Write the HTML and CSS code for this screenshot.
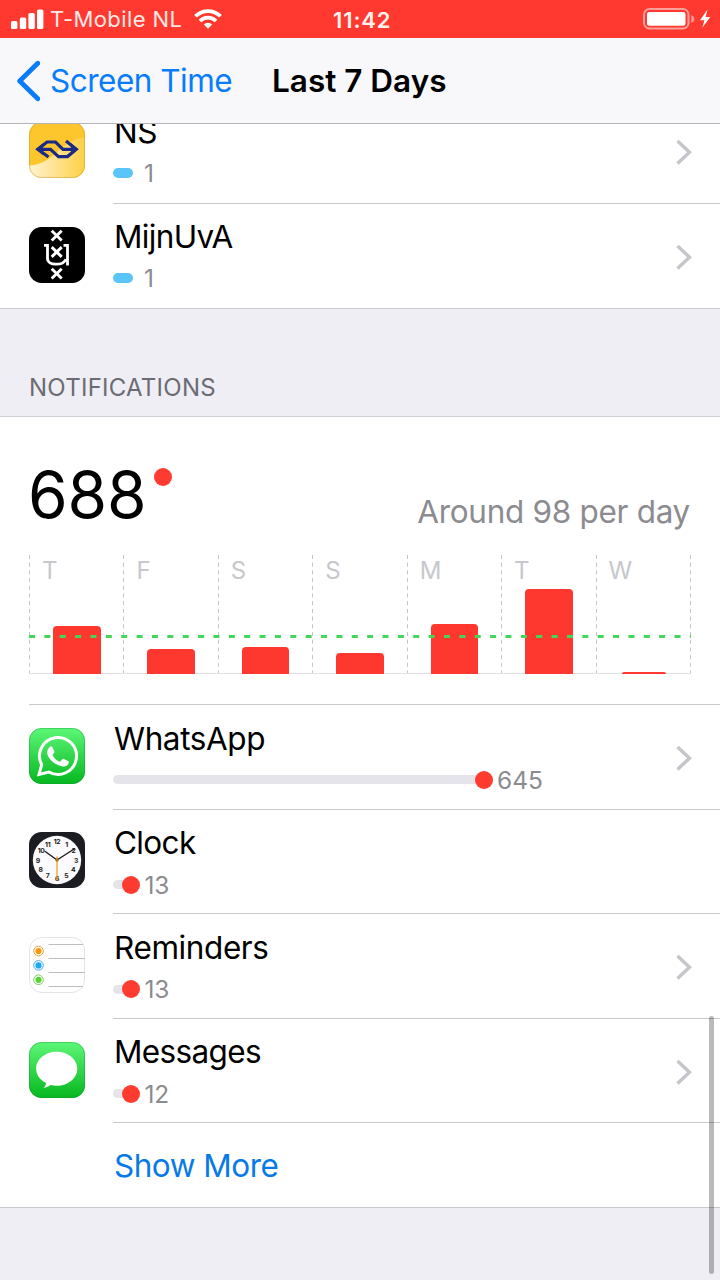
FILE: index.html
```
<!DOCTYPE html>
<html lang="en">
<head>
<meta charset="utf-8">
<title>Screen Time</title>
<link rel="stylesheet" href="styles.css">
</head>
<body>
<div class="screen">
  <header class="status">
    <div class="status-left">
      <svg class="signal" width="33" height="20" viewBox="0 0 33 20" fill="#fff"><rect x="0" y="12" width="6.4" height="8" rx="1.6"/><rect x="8.8" y="8.500" width="6.400" height="11.500" rx="1.600"/><rect x="17.400" y="4" width="6.400" height="16" rx="1.600"/><rect x="26" y="0.500" width="6.400" height="19.500" rx="1.600"/></svg>
      <span class="carrier">T-Mobile NL</span>
      <svg class="wifi" width="28" height="20" viewBox="0 0 28 20" fill="none" stroke="#fff" stroke-width="3.700"><path d="M1.500 7.300a17.500 17.500 0 0 1 25 0"/><path d="M6 12a11.300 11.300 0 0 1 16 0"/><path d="M9.800 15.500a6 6 0 0 1 8.400 0L14 19.700z" fill="#fff" stroke="none"/></svg>
    </div>
    <span class="time">11:42</span>
    <svg class="battery" width="68" height="24" viewBox="0 0 68 24"><rect x="1" y="2" width="44.500" height="19.500" rx="5.500" fill="none" stroke="#ff9f99" stroke-width="2"/><rect x="4" y="5" width="38.500" height="13.700" rx="2.200" fill="#fff"/><path d="M48.300 8.200c4 1.500 4 6.200 0 7.700z" fill="#ff9f99"/><path d="M64.500 2.500L57 13.200h4.500L59.300 20.800 67.300 10h-4.700z" fill="#fff"/></svg>
  </header>
  <nav class="nav">
    <svg class="back" width="24" height="42" viewBox="0 0 24 42" fill="none" stroke="#087cfb" stroke-width="4.800" stroke-linecap="round" stroke-linejoin="round"><path d="M21.800 3.300L3.700 21l18.100 17.700"/></svg>
    <span class="back-label">Screen Time</span>
    <h1 class="title">Last 7 Days</h1>
  </nav>
  <main class="content">
    <ul class="list pickups">
      <li class="row">
        <svg class="icon" width="56" height="56" viewBox="0 0 56 56">
          <defs><linearGradient id="ns" x1="0" y1="0" x2="1" y2="0"><stop offset="0" stop-color="#fff3d2"/><stop offset="1" stop-color="#fed045"/></linearGradient><clipPath id="tile"><rect width="56" height="56" rx="12.500"/></clipPath></defs>
          <g clip-path="url(#tile)"><rect width="56" height="56" fill="#fcc62c"/><path d="M0 43.500C10 43 18 39 26 32S41 18 56 15v41H0z" fill="url(#ns)"/></g>
          <rect x=".5" y=".5" width="55" height="55" rx="12" fill="none" stroke="#c8942b" stroke-opacity=".45"/>
          <g fill="none" stroke="#1b2a83" stroke-width="3.200"><path d="M19.500 35L9 27.300 18 20H26.500L34 27.300H43"/><path d="M13 27.300H21.500L29.500 34.600H38.500L47.200 27.300 37 19"/></g>
          <path d="M6.500 27.300l7.500-6v12zM49.500 27.300l-7.500-6v12z" fill="#1b2a83"/>
        </svg>
        <div class="body"><span class="name">NS</span><div class="metric"><i class="pill"></i><span class="num first">1</span></div></div>
        <svg class="chev" width="18" height="28" viewBox="0 0 18 28"><path d="M2.500 3L14.500 14.200 2.500 25.400"/></svg>
      </li>
      <li class="row last">
        <svg class="icon" width="56" height="56" viewBox="0 0 56 56"><rect width="56" height="56" rx="12.500"/>
          <g fill="none" stroke="#fff" stroke-width="2.900"><path d="M22.700 3.700l10 9.800M32.700 3.700l-10 9.800M22.700 20.100l10 9.800M32.700 20.100l-10 9.800M22.700 41.700l10 9.800M32.700 41.700l-10 9.800"/><path d="M15 18.300h3.500v13.200c0 7.500 15.500 7.500 18.500.7" stroke-width="2.800"/><path d="M34.500 18.300h4V38.500" stroke-width="2.800"/></g></svg>
        <div class="body"><span class="name tight">MijnUvA</span><div class="metric"><i class="pill"></i><span class="num first">1</span></div></div>
        <svg class="chev" width="18" height="28" viewBox="0 0 18 28"><path d="M2.500 3L14.500 14.200 2.500 25.400"/></svg>
      </li>
    </ul>
    <h2 class="section">NOTIFICATIONS</h2>
    <section class="panel">
      <div class="summary">
        <div class="total"><span class="total-num">688</span><i class="dot"></i></div>
        <span class="average">Around 98 per day</span>
      </div>
      <div class="chart">
        <div class="day"><span>T</span><i class="bar" style="height:48.500px"></i></div>
        <div class="day"><span>F</span><i class="bar" style="height:25.500px"></i></div>
        <div class="day"><span>S</span><i class="bar" style="height:27px"></i></div>
        <div class="day"><span>S</span><i class="bar" style="height:21px"></i></div>
        <div class="day"><span>M</span><i class="bar" style="height:50.500px"></i></div>
        <div class="day"><span>T</span><i class="bar" style="height:85.500px"></i></div>
        <div class="day"><span>W</span><i class="bar sliver" style="height:2px"></i></div>
        <svg class="lines" width="662" height="120" viewBox="0 0 662 120" fill="none"><path d="M.5 1v118M94.500 1v118M189.500 1v118M283.500 1v118M378.500 1v118M472.500 1v118M567.500 1v118M661.500 1v118" stroke="#c4c4cb" stroke-dasharray="4 3.700"/><path d="M0 82.500h662" stroke="#43d65b" stroke-width="3" stroke-dasharray="6 9.370"/></svg>
      </div>
      <ul class="list apps">
        <li class="row">
          <svg class="icon" width="56" height="56" viewBox="0 0 56 56"><defs><linearGradient id="wa" x2="0" y2="1"><stop stop-color="#5df777"/><stop offset="1" stop-color="#06b71f"/></linearGradient></defs><rect width="56" height="56" rx="12.500" fill="url(#wa)"/><rect x=".5" y=".5" width="55" height="55" rx="12" fill="none" stroke="#15903d" stroke-opacity=".35"/>
            <path d="M10 46.400l2.700-9.700A18.500 18.500 0 1 1 19.800 44z" fill="none" stroke="#fff" stroke-width="3" stroke-linejoin="miter"/><path d="M20.800 18.800c.6-.6 2-.8 2.500.2l2 4.300c.3.700.2 1.200-.3 1.800l-1.500 1.800c1.700 3.400 4 5.500 7.500 6.900l2.200-2.500c.5-.6 1-.7 1.700-.4l4.200 2.100c.8.400.9.800.8 1.500-.6 3-3.500 4.300-6.200 3.900-7.900-1.400-14-6.900-15.400-12.500-.5-2.700.7-5.300 2.500-7.100z" fill="#fff"/></svg>
          <div class="body"><span class="name">WhatsApp</span><div class="metric"><i class="track" style="width:365px"></i><i class="dot"></i><span class="num">645</span></div></div>
          <svg class="chev" width="18" height="28" viewBox="0 0 18 28"><path d="M2.500 3L14.500 14.200 2.500 25.400"/></svg>
        </li>
        <li class="row">
          <svg class="icon" width="56" height="56" viewBox="0 0 56 56"><rect width="56" height="56" rx="12.500" fill="#1c1d22"/><circle cx="28" cy="28" r="24.200" fill="#fbfafc"/>
            <g class="numerals"><text x="28" y="12">12</text><text x="37.500" y="14.600">1</text><text x="44.500" y="21.400">2</text><text x="47" y="31">3</text><text x="44.200" y="39.700">4</text><text x="37.300" y="46.400">5</text><text x="28" y="49.300">6</text><text x="18.700" y="46.400">7</text><text x="11.500" y="39.700">8</text><text x="8.800" y="31">9</text><text x="12.200" y="21.400">10</text><text x="18.700" y="14.600">11</text></g>
            <path d="M28 28L16.200 19.500M28 28l17.500-11.300" stroke="#15161a" stroke-width="1.300" stroke-linecap="round"/><path d="M28 24.500v24" stroke="#f5a31b" stroke-width="1.300"/><circle cx="28" cy="28" r="1.700" fill="#a97318"/></svg>
          <div class="body"><span class="name tight">Clock</span><div class="metric"><i class="track" style="width:12.400px"></i><i class="dot"></i><span class="num">13</span></div></div>
        </li>
        <li class="row">
          <svg class="icon" width="56" height="56" viewBox="0 0 56 56"><rect x=".5" y=".5" width="55" height="55" rx="12.500" fill="#fff" stroke="#e4e4e8"/><path d="M19.500 7.500H54M19.500 21.500H56M19.500 35.500H56M19.500 49.500H54" stroke="#bdbdc1"/>
            <g fill="#fff" stroke-width="1"><circle cx="9.500" cy="14" r="4.800" stroke="#e9a13b"/><circle cx="9.500" cy="28.400" r="4.800" stroke="#45a8e8"/><circle cx="9.500" cy="42.800" r="4.800" stroke="#79d05b"/></g><circle cx="9.500" cy="14" r="3.100" fill="#fb970b"/><circle cx="9.500" cy="28.400" r="3.100" fill="#1ba8f4"/><circle cx="9.500" cy="42.800" r="3.100" fill="#5bd32f"/></svg>
          <div class="body"><span class="name">Reminders</span><div class="metric"><i class="track" style="width:12.400px"></i><i class="dot"></i><span class="num">13</span></div></div>
          <svg class="chev" width="18" height="28" viewBox="0 0 18 28"><path d="M2.500 3L14.500 14.200 2.500 25.400"/></svg>
        </li>
        <li class="row">
          <svg class="icon" width="56" height="56" viewBox="0 0 56 56"><rect width="56" height="56" rx="12.500" fill="url(#wa)"/><rect x=".5" y=".5" width="55" height="55" rx="12" fill="none" stroke="#15903d" stroke-opacity=".35"/><path d="M27.700 9.800c11.500 0 20.600 7.600 20.600 17s-9.100 17-20.600 17c-2.200 0-4-.2-6-.7-2 1.600-4.400 2.600-7.200 2.700 1.600-1.400 2.500-3 2.600-4.800C11 38 7.100 32.800 7.100 26.800c0-9.400 9.100-17 20.600-17z" fill="#fff"/></svg>
          <div class="body"><span class="name tight">Messages</span><div class="metric"><i class="track" style="width:12.400px"></i><i class="dot"></i><span class="num">12</span></div></div>
          <svg class="chev" width="18" height="28" viewBox="0 0 18 28"><path d="M2.500 3L14.500 14.200 2.500 25.400"/></svg>
        </li>
      </ul>
      <a class="more">Show More</a>
    </section>
  </main>
  <i class="scrollbar"></i>
</div>
</body>
</html>
```
FILE: styles.css
```
* { box-sizing: border-box; margin: 0; padding: 0; }
body { font-family: Inter, "Liberation Sans", sans-serif; font-weight: 400; color: #000; }
i, svg { display: block; flex: none; }
ul { list-style: none; }
.screen { position: relative; width: 720px; height: 1280px; overflow: hidden; display: flex; flex-direction: column; background: #efeef5; }

.status { height: 38px; flex: none; background: #ff392f; color: #fff; display: grid; grid-template-columns: 1fr 60px 1fr; align-items: center; padding: 0 9px 0 11px; }
.status-left { display: flex; align-items: center; }
.carrier { font-size: 22px; line-height: 30px; margin-left: 6px; width: 144px; white-space: nowrap; letter-spacing: .4px; color: #ffe9e7; }
.time { margin-left: 2px; padding-top: 1px; font-size: 22px; line-height: 30px; font-weight: 600; letter-spacing: .9px; text-align: center; color: #fff2f0; }
.battery { justify-self: end; }

.nav { height: 86px; flex: none; display: flex; align-items: center; padding-left: 16px; background: #f8f7fa; border-bottom: 1px solid #b5b4b9; }
.back-label { width: 216px; margin-left: 10px; font-size: 31.500px; line-height: 40px; letter-spacing: -.5px; color: #087cfb; white-space: nowrap; }
.title { margin-left: 6px; font-size: 31.500px; line-height: 40px; font-weight: 600; white-space: nowrap; }

.content { flex: 1; min-height: 0; overflow: hidden; }
.list.pickups { margin-top: -25.500px; background: #fff; border-bottom: 1px solid #c9c8ce; }
.row { position: relative; display: flex; align-items: flex-start; height: 104.600px; padding-left: 29px; }
.pickups .row { height: 104.500px; }
.icon { margin-top: 23.200px; width: 56px; }
.pickups .row:first-child { height: 105px; }
.pickups .row:last-child { height: 104px; }
.apps .icon { margin-top: 22.900px; }
.pickups .icon { margin-top: 23px; }
.body { flex: 1; height: 100%; margin-left: 28px; padding-top: 13.700px; border-bottom: 1px solid #cac9ce; }
.last .body { border-bottom: 0; }
.name { display: block; margin-left: 1px; font-size: 31.500px; line-height: 40px; letter-spacing: -.4px; }
.name.tight { letter-spacing: -.65px; }
.metric { display: flex; align-items: center; height: 30px; margin-top: 6.300px; }
.num { font-size: 24.500px; line-height: 30px; color: #8b8b90; margin-left: 4px; }
.num.first { margin-left: 11px; }
.pill { width: 20px; height: 10px; border-radius: 5px; background: #5ac5f8; }
.track { height: 9px; border-radius: 5px 0 0 5px; background: #e5e4ea; }
.dot { width: 18px; height: 18px; border-radius: 50%; background: #ff3b30; }
.track + .dot { margin-left: -3px; }
.chev { position: absolute; right: 27px; top: 39px; fill: none; stroke: #c5c5ca; stroke-width: 3.400; }

.section { height: 107px; padding: 64px 0 0 29px; font-size: 24px; line-height: 30px; font-weight: 400; letter-spacing: .25px; color: #6c6b71; }
.panel { background: #fff; border-top: 1px solid #cfced5; border-bottom: 1px solid #c9c8ce; height: 792.500px; }
.summary { display: flex; justify-content: space-between; padding: 38.500px 30px 0 28px; height: 137.500px; }
.total { display: flex; }
.total-num { font-size: 64px; line-height: 80px; letter-spacing: -.2px; }
.total .dot { margin: 13px 0 0 8px; }
.average { font-size: 31.500px; line-height: 40px; margin-top: 37px; letter-spacing: -.3px; color: #8b8b90; }

.chart { position: relative; z-index: 0; display: grid; grid-template-columns: repeat(7, 94.430px); width: 662px; height: 120px; margin-left: 29px; }
.chart::after { content: ""; position: absolute; inset: auto 0 0; height: 1px; background: #e2e1e6; z-index: -1; }
.day { display: flex; flex-direction: column; justify-content: space-between; height: 120px; }
.day span { font-size: 24px; line-height: 30px; padding: 1.500px 0 0 13px; color: #c7c7cc; }
.bar { width: 47.500px; margin-left: 24px; border-radius: 4px 4px 0 0; background: #ff382f; }
.bar.sliver { width: 44.500px; margin-left: 26px; border-radius: 2px 2px 0 0; }
.lines { position: absolute; left: 0; top: 0; }

.numerals { font-size: 6.800px; font-weight: 700; text-anchor: middle; letter-spacing: -.3px; fill: #222; }

.apps { margin-top: 30px; }
.apps::before { content: ""; display: block; height: 1px; margin-left: 29px; background: #cac9ce; }
.more { display: block; padding: 23px 0 0 114px; font-size: 31.500px; line-height: 40px; letter-spacing: -.5px; color: #087ae8; }
.scrollbar { position: absolute; right: 6px; top: 1016px; width: 5px; height: 258px; border-radius: 3px; background: rgba(0, 0, 0, .27); }
```
